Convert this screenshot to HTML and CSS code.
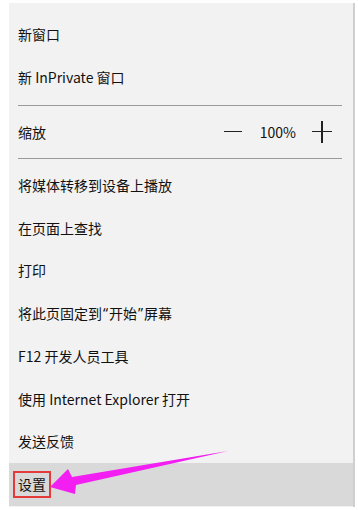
FILE: index.html
```html
<!DOCTYPE html>
<html lang="zh-CN">
  <head>
    <meta charset="UTF-8" />
    <meta name="viewport" content="width=device-width, initial-scale=1.0" />
    <title>更多操作</title>
    <link rel="stylesheet" href="styles.css">
  </head>
  <body>
    <!-- Edge "more actions" menu -->
    <div class="menu">
      <div class="menu-item">新窗口</div>
      <div class="menu-item">新 InPrivate 窗口</div>

      <div class="separator"></div>

      <div class="zoom-row">
        <span class="zoom-label">缩放</span>
        <div class="zoom-controls">
          <span class="zoom-minus"></span>
          <span class="zoom-value">100%</span>
          <span class="zoom-plus"></span>
        </div>
      </div>

      <div class="separator sep-bottom"></div>

      <div class="menu-item">将媒体转移到设备上播放</div>
      <div class="menu-item">在页面上查找</div>
      <div class="menu-item">打印</div>
      <div class="menu-item">将此页固定到<span class="quote">“</span>开始<span class="quote">”</span>屏幕</div>
      <div class="menu-item">F12 开发人员工具</div>
      <div class="menu-item">使用 Internet Explorer 打开</div>
      <div class="menu-item">发送反馈</div>
      <div class="menu-item selected">
        <span class="highlight-box">设置</span>
      </div>
    </div>

    <!-- Annotation arrow -->
    <svg class="arrow" width="358" height="510" viewBox="0 0 358 510">
      <polygon points="50,487 68,469 72,477 228,451 76,485 75,494" fill="#f21ef2" />
    </svg>
  </body>
</html>
```

FILE: styles.css
```css
* {
  margin: 0;
  padding: 0;
  box-sizing: border-box;
}

body {
  background-color: #fff;
  font-family: "Noto Sans CJK SC", "Noto Sans", sans-serif;
  font-size: 14px;
  color: #111;
  position: relative;
  width: 358px;
  height: 510px;
  overflow: hidden;
}

/* Menu panel */
.menu {
  margin: 3px 0 0 9px;
  width: 346px;
  height: 504px;
  background-color: #f2f2f2;
  border-right: 2px solid #cfcfcf;
  padding-top: 10px;
}

.menu-item {
  height: 42.75px;
  display: flex;
  align-items: center;
  padding-left: 9px;
  line-height: 1;
  white-space: nowrap;
}

.menu-item.selected {
  background-color: #d9d9d9;
  height: 43px;
}

.quote {
  font-family: "Noto Sans", sans-serif;
  margin: 0 1px;
}

.separator {
  height: 1px;
  background-color: #9a9a9a;
  margin: 6px 11px 6px 9px;
}

.sep-bottom {
  margin-bottom: 5px;
}

/* Zoom row */
.zoom-row {
  height: 40px;
  display: flex;
  align-items: center;
  justify-content: space-between;
  padding: 0 21px 0 9px;
}

.zoom-controls {
  display: flex;
  align-items: center;
}

.zoom-minus {
  width: 18px;
  height: 1.5px;
  background-color: #222;
}

.zoom-value {
  margin: 0 16px 0 18px;
  font-size: 14px;
}

.zoom-plus {
  position: relative;
  width: 20px;
  height: 22px;
}

.zoom-plus::before,
.zoom-plus::after {
  content: "";
  position: absolute;
  background-color: #222;
}

.zoom-plus::before {
  left: 0;
  right: 0;
  top: 10px;
  height: 1.5px;
}

.zoom-plus::after {
  top: 0;
  bottom: 0;
  left: 9.25px;
  width: 1.5px;
}

/* Annotation */
.highlight-box {
  margin-left: -5px;
  padding: 2px 3px;
  border: 2.5px solid #e53a3a;
  line-height: 19px;
}

.arrow {
  position: absolute;
  top: 0;
  left: 0;
  pointer-events: none;
}
```
